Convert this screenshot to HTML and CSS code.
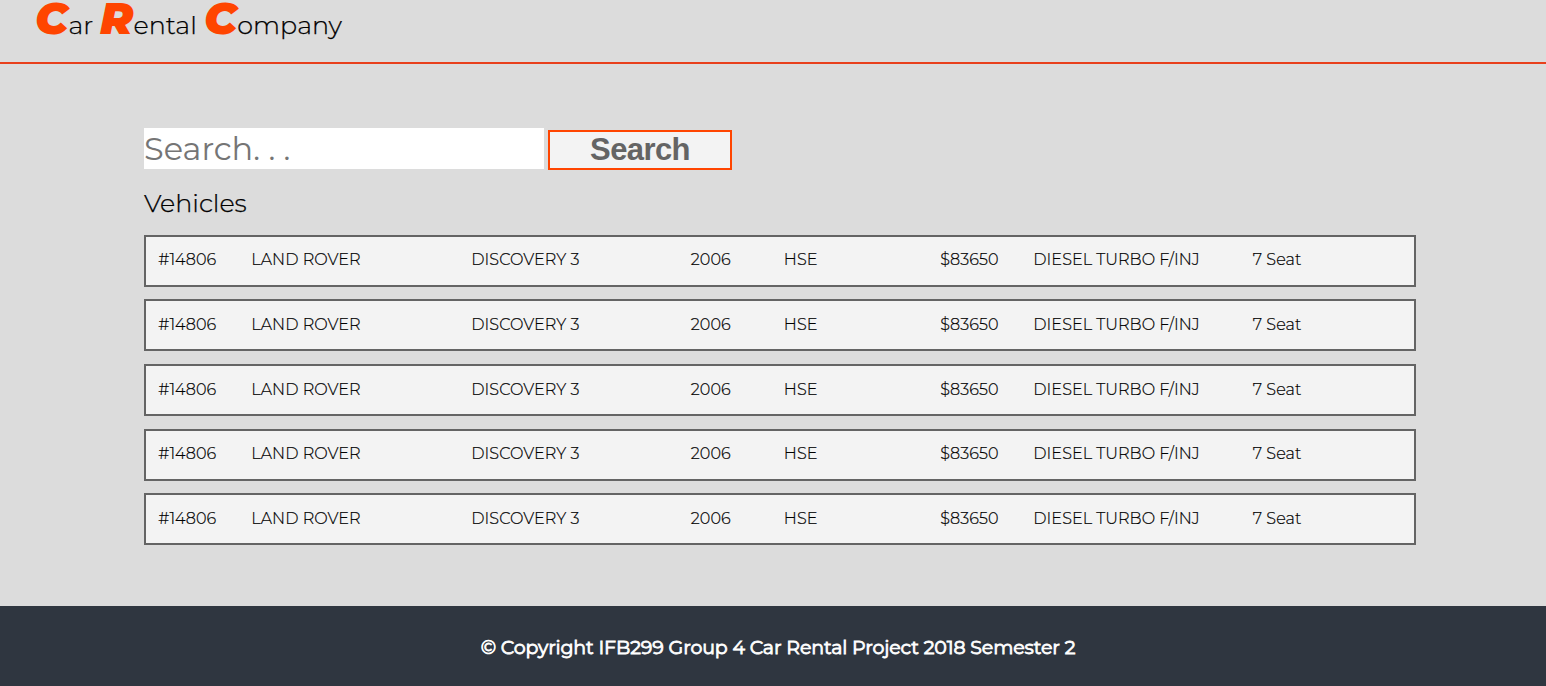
FILE: index.html
```html
<!DOCTYPE html>
<html lang="en">
<head>
<meta charset="utf-8">
<title>Car Rental Company</title>
<link rel="stylesheet" href="styles.css">
</head>
<body>
<header class="header">
  <h1 class="brand"><span class="word"><span class="cap">C</span><span class="rest">ar</span></span><span class="word rental"><span class="cap">R</span><span class="rest">ental</span></span><span class="word company"><span class="cap">C</span><span class="rest">ompany</span></span></h1>
</header>
<main class="content">
  <form class="search">
    <input class="search-input" type="text" placeholder="Search. . .">
    <button class="search-button" type="button">Search</button>
  </form>
  <h2 class="title">Vehicles</h2>
  <div class="list">
    <div class="row"><span class="id">#14806</span><span class="make">LAND ROVER</span><span class="model">DISCOVERY 3</span><span class="year">2006</span><span class="series">HSE</span><span class="price">$83650</span><span class="engine">DIESEL TURBO F/INJ</span><span class="seats">7 Seat</span></div>
    <div class="row"><span class="id">#14806</span><span class="make">LAND ROVER</span><span class="model">DISCOVERY 3</span><span class="year">2006</span><span class="series">HSE</span><span class="price">$83650</span><span class="engine">DIESEL TURBO F/INJ</span><span class="seats">7 Seat</span></div>
    <div class="row"><span class="id">#14806</span><span class="make">LAND ROVER</span><span class="model">DISCOVERY 3</span><span class="year">2006</span><span class="series">HSE</span><span class="price">$83650</span><span class="engine">DIESEL TURBO F/INJ</span><span class="seats">7 Seat</span></div>
    <div class="row"><span class="id">#14806</span><span class="make">LAND ROVER</span><span class="model">DISCOVERY 3</span><span class="year">2006</span><span class="series">HSE</span><span class="price">$83650</span><span class="engine">DIESEL TURBO F/INJ</span><span class="seats">7 Seat</span></div>
    <div class="row"><span class="id">#14806</span><span class="make">LAND ROVER</span><span class="model">DISCOVERY 3</span><span class="year">2006</span><span class="series">HSE</span><span class="price">$83650</span><span class="engine">DIESEL TURBO F/INJ</span><span class="seats">7 Seat</span></div>
  </div>
</main>
<footer class="footer">© Copyright IFB299 Group 4 Car Rental Project 2018 Semester 2</footer>
</body>
</html>
```
FILE: styles.css
```css
* { box-sizing: border-box; }
body {
  margin: 0;
  height: 686px;
  display: flex;
  flex-direction: column;
  background: #dcdcdc;
  color: #000;
  font-family: Montserrat, Inter, sans-serif;
  font-weight: 300;
}
.header {
  height: 64px;
  padding-left: 35px;
  border-bottom: 2px solid #e8401c;
}
.brand {
  margin: 0;
  display: flex;
  align-items: baseline;
  font-size: 25.4px;
  font-weight: 300;
  line-height: 36px;
}
.rest { -webkit-text-stroke: 0.25px #000; }
.word { display: flex; align-items: baseline; width: 65px; }
.rental { width: 104px; }
.cap {
  color: #ff4500;
  font-size: 44.8px;
  font-weight: 900;
  font-style: italic;
  width: 33.5px;
}
.content {
  flex: none;
  height: 542px;
  padding: 64px 130px 0 144px;
}
.search { display: flex; gap: 4px; }
.search-input {
  width: 400px;
  height: 41px;
  padding: 0;
  border: 0;
  background: #fff;
  font: 400 32px Montserrat, Inter, sans-serif;
}
.search-input::placeholder { color: #757575; }
.search-button {
  width: 184px;
  height: 40px;
  margin-top: 2px;
  padding: 0;
  border: 2px solid #ff4500;
  background: #f3f3f3;
  color: #646464;
  font: bold 31px/36px "Liberation Sans", Arial, sans-serif;
  letter-spacing: -0.6px;
}
.title {
  margin: 18px 0 16.8px;
  font-size: 25.4px;
  font-weight: 300;
  -webkit-text-stroke: 0.25px #000;
  line-height: 30px;
}
.list { display: grid; gap: 12.6px; }
.row {
  display: grid;
  grid-template-columns: 93px 220px 219.5px 93px 156.5px 93px 219.5px 1fr;
  width: 1272px;
  height: 52px;
  padding: 13.55px 12px 0 12.3px;
  border: 2px solid #646464;
  background: #f3f3f3;
  font-size: 16px;
  line-height: 20px;
  letter-spacing: 0.07px;
  -webkit-text-stroke: 0.2px #000;
}
.row span { white-space: nowrap; }
.footer {
  height: 80px;
  padding-left: 10px;
  background: #2f3640;
  color: #fff;
  font-size: 19px;
  font-weight: 400;
  letter-spacing: -0.13px;
  -webkit-text-stroke: 0.8px #fff;
  line-height: 84px;
  text-align: center;
}
```
